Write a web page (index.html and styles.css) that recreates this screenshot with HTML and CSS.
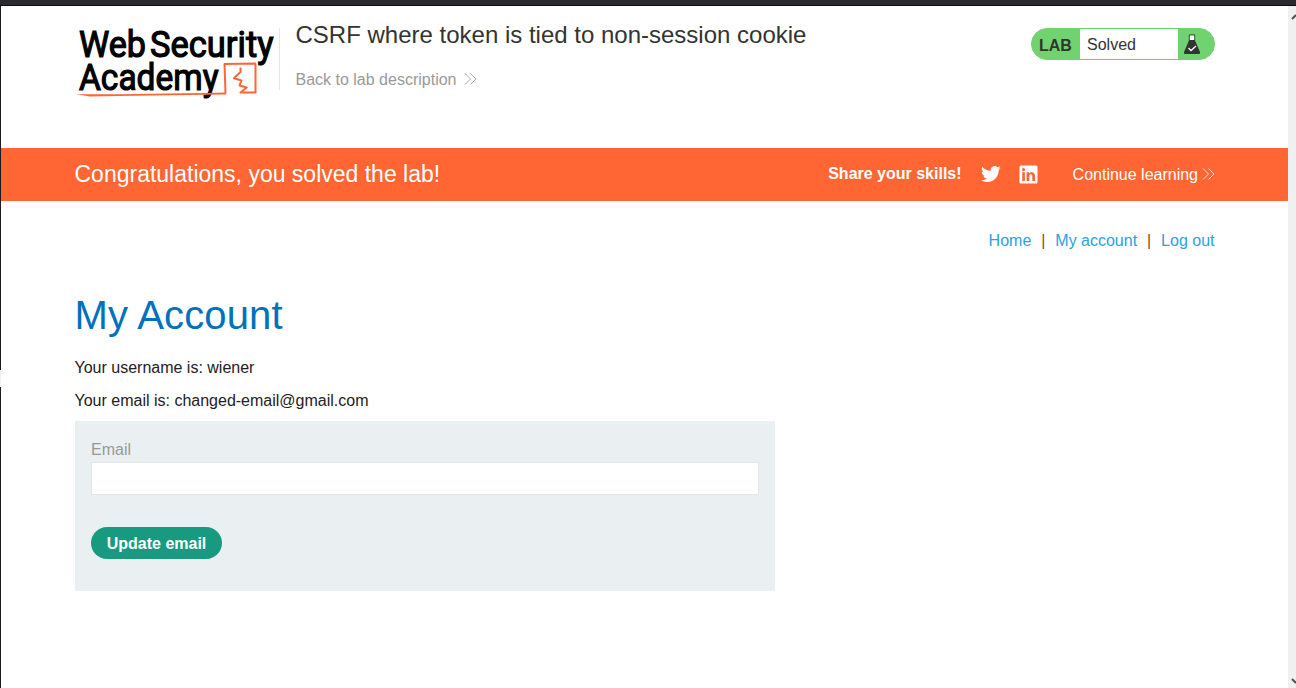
FILE: index.html
```
<!DOCTYPE html>
<html lang="en">
<head>
<meta charset="utf-8">
<title>CSRF where token is tied to non-session cookie</title>
<link rel="stylesheet" href="styles.css">
</head>
<body>
<div class="window-top"></div>
<div class="window">
  <div class="edge"><span class="edge-gap"></span></div>
  <div class="page">
    <header class="header">
      <svg class="logo" width="204" height="78" viewBox="0 0 204 78" role="img" aria-label="Web Security Academy">
        <g class="logo-text">
          <text x="4" y="35.800" textLength="67" lengthAdjust="spacingAndGlyphs">Web</text>
          <text x="75" y="35.800" textLength="123.500" lengthAdjust="spacingAndGlyphs">Security</text>
          <text x="4" y="68.500" textLength="139.500" lengthAdjust="spacingAndGlyphs">Academy</text>
        </g>
        <g fill="none" stroke="#ff6633" stroke-width="2" stroke-linejoin="round">
          <path d="M181 42.500 149.500 43 150.500 72.500M180.500 42.500 180.500 71.500H165.500L171.700 66.500 164.500 64.500 166.500 59.500 159 57.300 165.500 51V46.500"/>
        </g>
        <path fill="#ff6633" d="M1 73 Q30 74 151 71.500V73.500L75 74.500 15 75.500Z"/>
      </svg>
      <div class="title-block">
        <h2>CSRF where token is tied to non-session cookie</h2>
        <a class="back">Back to lab description
          <svg width="13" height="12" viewBox="0 0 13 12"><path d="M1 .5 6.500 6 1 11.500M6.500 .5 12 6 6.500 11.500"/></svg>
        </a>
      </div>
      <div class="lab-status">
        <span class="lab-tag">LAB</span>
        <span class="lab-state">Solved</span>
        <svg class="flask" width="18" height="22" viewBox="0 0 18 22">
          <path d="M6.200 7H11.800L17 19Q17.500 21 16 21H2Q.5 21 1 19Z" fill="#333332"/>
          <path d="M6.700 2.500H11.300V7H6.700Z" fill="#fff"/>
          <path d="M6 1.800H12M6.300 2V7.500M11.700 2V7.500" stroke="#333332" stroke-width=".8" fill="none"/>
          <path d="M5.500 15 8 17.500 13 13" stroke="#fff" stroke-width="1.300" fill="none"/>
        </svg>
      </div>
    </header>
    <section class="banner">
      <h4>Congratulations, you solved the lab!</h4>
      <span class="share">Share your skills!</span>
      <svg class="twitter" width="20" height="20" viewBox="0 0 24 24"><path fill="#fff" d="M23.600 4.700a9.700 9.700 0 0 1-2.700.75 4.800 4.800 0 0 0 2.100-2.650 9.600 9.600 0 0 1-3.100 1.180 4.840 4.840 0 0 0-8.250 4.400A13.700 13.700 0 0 1 1.700 3.350a4.840 4.840 0 0 0 1.500 6.450 4.800 4.800 0 0 1-2.200-.6v.06a4.840 4.840 0 0 0 3.880 4.740 4.800 4.800 0 0 1-2.180.08 4.840 4.840 0 0 0 4.510 3.360A9.700 9.700 0 0 1 .06 19.400a13.700 13.700 0 0 0 7.420 2.170c8.900 0 13.760-7.370 13.760-13.760 0-.21 0-.42-.01-.63a9.800 9.800 0 0 0 2.370-2.480z"/></svg>
      <svg class="linkedin" width="19" height="19" viewBox="0 0 19 19"><rect x=".5" y=".5" width="18" height="18" rx="1.500" fill="#fff"/><path fill="#ff6633" d="M3.200 7.300H5.900V16H3.200ZM7.600 7.300H10.200V8.500C11.700 6.300 16 6.600 16 10.800V16H13.300V11.500C13.300 8.600 10.300 8.700 10.300 11.500V16H7.600Z"/><circle cx="4.550" cy="4.600" r="1.550" fill="#ff6633"/></svg>
      <a class="continue">Continue learning
        <svg width="13" height="12" viewBox="0 0 13 12"><path d="M1 .5 6.500 6 1 11.500M6.500 .5 12 6 6.500 11.500"/></svg>
      </a>
    </section>
    <main class="content">
      <nav class="links"><a>Home</a><i>|</i><a>My account</a><i>|</i><a>Log out</a></nav>
      <h1>My Account</h1>
      <p>Your username is: wiener</p>
      <p>Your email is: changed-email@gmail.com</p>
      <form class="form">
        <label for="email">Email</label>
        <input id="email" type="email">
        <button type="button">Update email</button>
      </form>
    </main>
  </div>
  <div class="scrollbar">
    <svg width="8" height="10" viewBox="0 0 8 10"><path d="M4 9 8 5"/></svg>
    <svg width="8" height="10" viewBox="0 0 8 10"><path d="M4 1 8 5"/></svg>
  </div>
</div>
</body>
</html>
```
FILE: styles.css
```
* { box-sizing: border-box; }
body {
  margin: 0;
  height: 688px;
  overflow: hidden;
  background: #fff;
  color: #222;
  font: 16px/19px "Liberation Sans", Arial, sans-serif;
}
h1, h2, h4, p { margin: 0; font-weight: 400; }
.window-top { height: 6px; background: #2b2a33; border-bottom: 1px solid #0c0c0d; }
.window { display: flex; height: 682px; }
.edge { width: 1px; background: #1c1b22; padding-top: 364px; }
.edge-gap { display: block; height: 17px; background: #f0f0f0; }
.page { flex: 1; }
.scrollbar {
  width: 8px;
  padding: 4px 0 0;
  background: #f0f0f0;
  display: flex;
  flex-direction: column;
  justify-content: space-between;
}
.scrollbar path { fill: none; stroke: #505050; stroke-width: 2; }

.header { display: flex; align-items: flex-start; height: 142px; padding: 15px 73px 0 74px; }
.logo { flex: none; overflow: visible; }
.logo-text { font: 400 37px Roboto, sans-serif; fill: #000; stroke: #000; stroke-width: 1.2; }
.title-block { height: 62px; margin-top: 7px; padding-left: 15.5px; border-left: 1px solid #e6e6e6; }
h2 { margin-top: -8px; color: #333332; font-size: 24px; line-height: 30px; white-space: nowrap; }
.back { display: flex; align-items: center; gap: 8px; margin-top: 20px; color: #999; }
.back svg { margin-bottom: 1px; }
.back path { fill: none; stroke: #999; stroke-width: .8; }
.lab-status {
  display: flex;
  align-items: center;
  width: 184px;
  height: 32px;
  margin: 7px 0 0 auto;
  border: 1px solid #70d36f;
  border-radius: 16px;
  background: #70d36f;
  color: #333332;
}
.lab-tag { width: 48px; padding: 2px 0 0 7px; font-weight: 700; }
.lab-state { width: 98px; height: 30px; padding-left: 7px; background: #fff; line-height: 31px; }
.flask { margin-left: 5px; }

.banner {
  display: flex;
  align-items: center;
  height: 53px;
  padding: 0 73px 0 73.5px;
  background: #ff6633;
  color: #fff;
}
h4 { padding-bottom: 1px; font-size: 23px; line-height: 30px; }
.share { margin-left: auto; font-weight: 700; padding-bottom: 2px; }
.twitter { margin-left: 19px; margin-bottom: 1px; }
.linkedin { margin-left: 18px; }
.continue { display: flex; align-items: center; gap: 4px; margin-left: 35px; }
.continue svg { margin-bottom: 1px; }
.continue path { fill: none; stroke: #fff; stroke-width: .8; }

.content { padding: 30px 73.5px 0 73.5px; }
.links { display: flex; justify-content: flex-end; color: #29a2e0; }
.links i { width: 24px; text-align: center; font-style: normal; color: #8a4a18; }
h1 { margin-top: 40px; color: #0071bc; font-size: 40px; line-height: 50px; letter-spacing: .15px; }
p { margin-top: 14px; }
h1 + p { margin-top: 18px; }
.form {
  width: 700px;
  height: 170px;
  margin: 11px 0 0 .5px;
  padding: 19px 16px 0;
  background: #eaeff2;
}
.form label { display: block; color: #999; }
.form input {
  display: block;
  width: 668px;
  height: 33px;
  margin-top: 3px;
  border: 1px solid #e4e4e4;
  background: #fff;
}
.form button {
  display: block;
  width: 131px;
  height: 32px;
  margin-top: 32px;
  padding: 1px 0 0;
  border: 0;
  border-radius: 16px;
  background: #189a80;
  color: #fff;
  font: 700 16px "Liberation Sans", Arial, sans-serif;
}
```
